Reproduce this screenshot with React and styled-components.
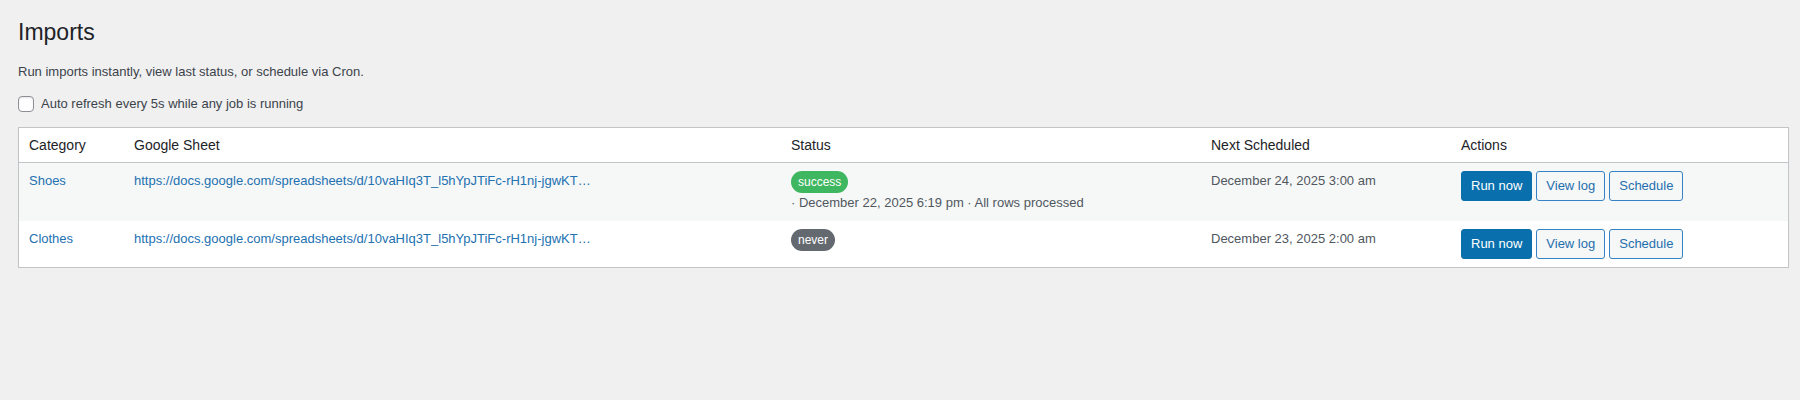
import React from "react";
import styled, { createGlobalStyle } from "styled-components";

const Global = createGlobalStyle`
  *, *::before, *::after { box-sizing: border-box; }
  html, body { margin: 0; padding: 0; background: #f0f0f1; }
  body {
    font-family: "Liberation Sans", Arial, sans-serif;
    font-size: 13px;
    line-height: 1.4em;
    color: #3c434a;
  }
`;

const Wrap = styled.div`
  padding: 0 11px 0 18px;
`;

const Title = styled.h1`
  margin: 17px 0 0;
  padding: 0;
  font-size: 23px;
  font-weight: 400;
  line-height: 30px;
  color: #1d2327;
`;

const Description = styled.p`
  margin: 15px 0 0;
  font-size: 13px;
  line-height: 19.5px;
`;

const CheckRow = styled.label`
  display: flex;
  align-items: center;
  gap: 7px;
  margin-top: 13px;
  height: 19.5px;
  font-size: 13px;
  cursor: pointer;
`;

const Checkbox = styled.input.attrs({ type: "checkbox" })`
  appearance: none;
  margin: 0;
  width: 16px;
  height: 16px;
  border: 1px solid #8c8f94;
  border-radius: 4px;
  background: #fff;
  box-shadow: inset 0 1px 2px rgba(0, 0, 0, 0.1);
`;

const Table = styled.table`
  margin-top: 13px;
  width: 100%;
  table-layout: fixed;
  border-spacing: 0;
  border: 1px solid #c3c4c7;
  background: #fff;
  box-shadow: 0 1px 1px rgba(0, 0, 0, 0.04);
`;

const Th = styled.th`
  width: ${(p) => (p.$w ? `${p.$w}px` : "auto")};
  padding: 8px 10px;
  text-align: left;
  font-weight: 400;
  font-size: 14px;
  line-height: 18px;
  color: #1d2327;
  border-bottom: 1px solid #c3c4c7;
`;

const Row = styled.tr`
  background: ${(p) => (p.$alt ? "#f6f7f7" : "#fff")};
`;

const Td = styled.td`
  padding: 8px 10px;
  vertical-align: top;
  font-size: 13px;
  line-height: 19.5px;
  color: #50575e;
  white-space: nowrap;
`;

const Link = styled.a`
  color: #2271b1;
  text-decoration: none;
`;

const StatusCell = styled.div`
  display: flex;
  flex-direction: column;
  align-items: flex-start;
`;

const Badge = styled.span`
  display: inline-block;
  height: 22px;
  padding: 0 7px;
  border-radius: 999px;
  font-size: 12px;
  line-height: 22px;
  color: #fff;
  background: ${(p) => (p.$tone === "success" ? "#3fb660" : "#646970")};
`;

const Meta = styled.div`
  line-height: 19.5px;
`;

const Actions = styled.div`
  display: flex;
  gap: 4px;
`;

const Button = styled.button`
  font-family: inherit;
  font-size: 13px;
  line-height: 28px;
  min-height: 30px;
  padding: 0 9px;
  margin: 0;
  border-radius: 3px;
  cursor: pointer;
  border: 1px solid ${(p) => (p.$primary ? "#0a70ad" : "#3582c4")};
  background: ${(p) => (p.$primary ? "#0a70ad" : "#f6f7f7")};
  color: ${(p) => (p.$primary ? "#fff" : "#1f6fae")};
`;

const url = "https://docs.google.com/spreadsheets/d/10vaHIq3T_l5hYpJTiFc-rH1nj-jgwKT…";

const rows = [
  {
    cat: "Shoes",
    status: "success",
    meta: "· December 22, 2025 6:19 pm · All rows processed",
    next: "December 24, 2025 3:00 am",
  },
  {
    cat: "Clothes",
    status: "never",
    meta: null,
    next: "December 23, 2025 2:00 am",
  },
];

export default function App() {
  return (
    <>
      <Global />
      <Wrap>
        <Title>Imports</Title>
        <Description>Run imports instantly, view last status, or schedule via Cron.</Description>
        <CheckRow>
          <Checkbox />
          Auto refresh every 5s while any job is running
        </CheckRow>
        <Table>
          <thead>
            <tr>
              <Th $w={105}>Category</Th>
              <Th $w={657}>Google Sheet</Th>
              <Th $w={420}>Status</Th>
              <Th $w={250}>Next Scheduled</Th>
              <Th>Actions</Th>
            </tr>
          </thead>
          <tbody>
            {rows.map((r, i) => (
              <Row key={r.cat} $alt={i % 2 === 0}>
                <Td>
                  <Link href="#">{r.cat}</Link>
                </Td>
                <Td>
                  <Link href="#">{url}</Link>
                </Td>
                <Td>
                  <StatusCell>
                    <Badge $tone={r.status}>{r.status}</Badge>
                    {r.meta && <Meta>{r.meta}</Meta>}
                  </StatusCell>
                </Td>
                <Td>{r.next}</Td>
                <Td>
                  <Actions>
                    <Button $primary>Run now</Button>
                    <Button>View log</Button>
                    <Button>Schedule</Button>
                  </Actions>
                </Td>
              </Row>
            ))}
          </tbody>
        </Table>
      </Wrap>
    </>
  );
}
